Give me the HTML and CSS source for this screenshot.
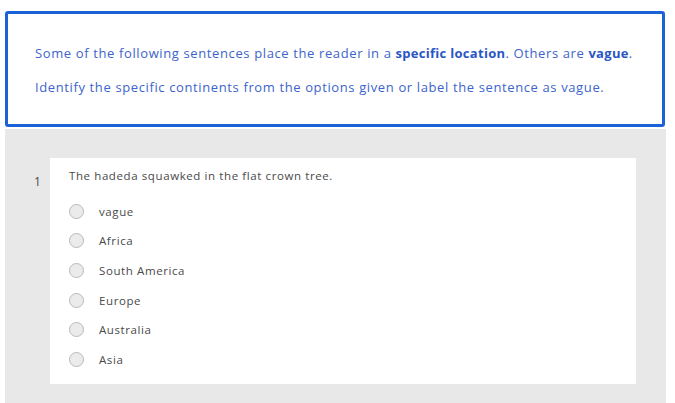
FILE: index.html
```html
<!DOCTYPE html>
<html lang="en">
<head>
<meta charset="utf-8">
<title>Quiz</title>
<link rel="stylesheet" href="styles.css">
</head>
<body>
  <div class="intro">
    <p>Some of the following sentences place the reader in a <strong>specific location</strong>. Others are <strong>vague</strong>.</p>
    <p>Identify the specific continents from the options given or label the sentence as vague.</p>
  </div>
  <div class="sheet">
    <div class="question">
      <div class="num">1</div>
      <div class="card">
        <div class="prompt">The hadeda squawked in the flat crown tree.</div>
        <ul class="options">
          <li><span class="radio"></span><span>vague</span></li>
          <li><span class="radio"></span><span>Africa</span></li>
          <li><span class="radio"></span><span>South America</span></li>
          <li><span class="radio"></span><span>Europe</span></li>
          <li><span class="radio"></span><span>Australia</span></li>
          <li><span class="radio"></span><span>Asia</span></li>
        </ul>
      </div>
    </div>
  </div>
</body>
</html>
```

FILE: styles.css
```css
html, body {
  margin: 0;
  padding: 0;
  background: #ffffff;
}
body {
  font-family: "Open Sans", "DejaVu Sans", sans-serif;
  width: 675px;
  height: 403px;
  overflow: hidden;
}
.intro {
  margin: 11px 0 0 5px;
  height: 110px;
  border: 3px solid #1b62d8;
  border-radius: 3px;
  padding: 0 0 0 27px;
  box-sizing: content-box;
  width: 627px;
  color: #3c64cc;
  font-size: 13px;
  letter-spacing: 0.62px;
  display: flex;
  flex-direction: column;
  justify-content: flex-start;
}
.intro p {
  margin: 0;
  line-height: 18px;
}
.intro p:first-child {
  margin-top: 30px;
}
.intro p + p {
  margin-top: 16px;
}
.intro strong {
  font-weight: 700;
  color: #2a56c4;
  letter-spacing: 0.3px;
}
.sheet {
  margin: 2px 0 0 5px;
  width: 661px;
  height: 274px;
  background: #e8e8e8;
  padding-top: 29px;
  box-sizing: border-box;
}
.question {
  display: flex;
  align-items: flex-start;
}
.num {
  width: 45px;
  box-sizing: border-box;
  padding: 15px 0 0 29px;
  font-size: 12px;
  color: #4a4a4a;
}
.card {
  width: 586px;
  height: 226px;
  background: #ffffff;
  padding: 10px 0 0 19px;
  box-sizing: border-box;
  color: #4a4a4a;
  font-size: 11.5px;
  letter-spacing: 0.6px;
}
.prompt {
  line-height: 16px;
}
.options {
  list-style: none;
  margin: 19px 0 0 0;
  padding: 0;
  display: flex;
  flex-direction: column;
  gap: 13.7px;
}
.options li {
  display: flex;
  align-items: center;
  height: 16px;
  gap: 15px;
}
.radio {
  width: 13px;
  height: 13px;
  border: 1px solid #b9b9b9;
  border-radius: 50%;
  background: #ebebeb;
  flex: none;
}
```
